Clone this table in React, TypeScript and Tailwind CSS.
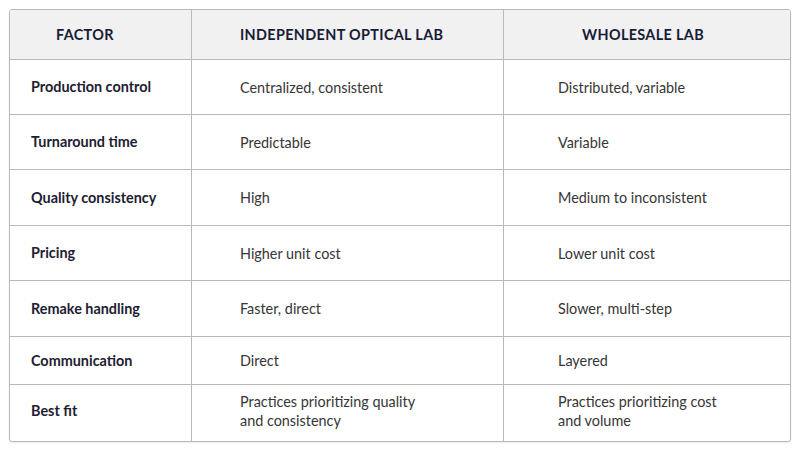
const rows: { factor: string; indie: string[]; wholesale: string[] }[] = [
  { factor: "Production control", indie: ["Centralized, consistent"], wholesale: ["Distributed, variable"] },
  { factor: "Turnaround time", indie: ["Predictable"], wholesale: ["Variable"] },
  { factor: "Quality consistency", indie: ["High"], wholesale: ["Medium to inconsistent"] },
  { factor: "Pricing", indie: ["Higher unit cost"], wholesale: ["Lower unit cost"] },
  { factor: "Remake handling", indie: ["Faster, direct"], wholesale: ["Slower, multi-step"] },
  { factor: "Communication", indie: ["Direct"], wholesale: ["Layered"] },
  {
    factor: "Best fit",
    indie: ["Practices prioritizing quality", "and consistency"],
    wholesale: ["Practices prioritizing cost", "and volume"],
  },
];

export default function App() {
  return (
    <div className="w-[800px] h-[450px] bg-white p-[9px] font-['Lato',sans-serif] text-[14.4px]">
      <div className="grid w-[782px] grid-cols-[182px_312px_286px] grid-rows-[50px_55px_55px_56px_55px_56px_48px_56px] overflow-hidden rounded-[3px] border border-[#b9b9b9] shadow-[0_1px_2px_rgba(0,0,0,0.08)]">
        <div className="flex items-center border-r border-b border-[#b9b9b9] bg-[#f1f1f1] pl-[46px] pt-[1px] font-bold tracking-[0.35px] text-[#171c35]">
          FACTOR
        </div>
        <div className="flex items-center border-r border-b border-[#b9b9b9] bg-[#f1f1f1] pl-[48px] pt-[1px] font-bold tracking-[0.35px] text-[#171c35]">
          INDEPENDENT OPTICAL LAB
        </div>
        <div className="flex items-center border-b border-[#b9b9b9] bg-[#f1f1f1] pl-[78px] pt-[1px] font-bold tracking-[0.35px] text-[#171c35]">
          WHOLESALE LAB
        </div>
        {rows.map((r, i) => {
          const last = i === rows.length - 1;
          const bb = last ? "pb-[4px]" : "border-b";
          return [
            <div key={`f${i}`} className={`flex items-center border-r ${bb} border-[#b9b9b9] pl-[21px] font-bold text-[#1d2031]`}>
              {r.factor}
            </div>,
            <div key={`a${i}`} className={`flex flex-col justify-center border-r ${bb} border-[#b9b9b9] pl-[48px] leading-[19px] text-[#363636]`}>
              {r.indie.map((t) => (
                <span key={t}>{t}</span>
              ))}
            </div>,
            <div key={`b${i}`} className={`flex flex-col justify-center ${bb} border-[#b9b9b9] pl-[54px] leading-[19px] text-[#363636]`}>
              {r.wholesale.map((t) => (
                <span key={t}>{t}</span>
              ))}
            </div>,
          ];
        })}
      </div>
    </div>
  );
}
